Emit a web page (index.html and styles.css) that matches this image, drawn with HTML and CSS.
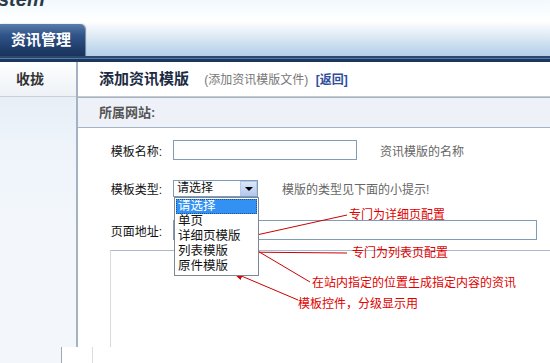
FILE: index.html
```html
<!DOCTYPE html>
<html lang="zh-CN">
<head>
    <meta charset="UTF-8">
    <title>添加资讯模版</title>
    <link rel="stylesheet" href="styles.css">
</head>
<body>
<div class="page">

    <div class="top">
        <div class="logo">stem</div>
        <div class="tab">资讯管理</div>
    </div>
    <div class="bar"></div>

    <div class="wrap">
        <div class="side">
            <div class="side-head">收拢</div>
        </div>

        <div class="main">
            <div class="main-head">
                <b class="title">添加资讯模版</b>
                <span class="sub">(添加资讯模版文件)</span>
                <a class="back">[返回]</a>
            </div>
            <div class="site">所属网站:</div>

            <div class="form">
                <div class="row">
                    <label>模板名称:</label>
                    <span class="input short"></span>
                    <span class="hint hint-name">资讯模版的名称</span>
                </div>
                <div class="row row-type">
                    <label>模板类型:</label>
                    <div class="select">
                        <span class="select-text">请选择</span>
                        <span class="select-btn"><i></i></span>
                        <ul class="menu">
                            <li class="on">请选择</li>
                            <li>单页</li>
                            <li>详细页模版</li>
                            <li>列表模版</li>
                            <li>原件模版</li>
                        </ul>
                    </div>
                    <span class="hint hint-type">模版的类型见下面的小提示!</span>
                </div>
                <div class="row row-url">
                    <label>页面地址:</label>
                    <span class="input long"></span>
                </div>
                <div class="box"></div>
            </div>
        </div>
    </div>

    <div class="foot">
        <div class="foot-side"></div>
        <div class="foot-col"></div>
    </div>

    <!-- 注释箭头 -->
    <div class="notes">
        <svg width="550" height="363" viewBox="0 0 550 363">
            <defs>
                <marker id="tip" markerUnits="userSpaceOnUse" markerWidth="11" markerHeight="8" refX="11" refY="4" orient="auto">
                    <path d="M0,0 L11,4 L0,8 z" fill="#d80000"/>
                </marker>
            </defs>
            <g stroke="#cc0000" stroke-width="1" fill="none">
                <line x1="310" y1="282" x2="207" y2="221" marker-end="url(#tip)"/>
                <line x1="347" y1="215" x2="243" y2="238" marker-end="url(#tip)"/>
                <line x1="347" y1="253" x2="233" y2="252" marker-end="url(#tip)"/>
                <line x1="298" y1="300" x2="232" y2="272" marker-end="url(#tip)"/>
            </g>
        </svg>
        <span class="note n1">专门为详细页配置</span>
        <span class="note n2">专门为列表页配置</span>
        <span class="note n3">在站内指定的位置生成指定内容的资讯</span>
        <span class="note n4">模板控件，分级显示用</span>
    </div>

</div>
</body>
</html>
```

FILE: styles.css
```css
*{
    box-sizing: border-box;
}
body{
    margin: 0;
    font-family: "Liberation Sans", "Noto Sans CJK SC", sans-serif;
    font-size: 12px;
    color: #111;
    background: #fff;
}
.page{
    position: relative;
    width: 550px;
    height: 363px;
    overflow: hidden;
}

/* header */
.top{
    height: 56px;
    display: flex;
    flex-direction: column;
    overflow: hidden;
    background: linear-gradient(#f2f9fd 0, #fff 38%, #e4eef7 60%, #c4daee 85%, #b4cfe8 100%);
}
.logo{
    margin: -11px 0 0 -2px;
    font-size: 20px;
    line-height: 20px;
    font-weight: bold;
    font-style: italic;
    color: #2c3a48;
}
.tab{
    margin-top: auto;
    width: 85px;
    height: 32px;
    padding-left: 11px;
    line-height: 32px;
    font-size: 15px;
    font-weight: bold;
    color: #fff;
    border-radius: 0 5px 0 0;
    background: linear-gradient(#5a7cab, #30548a 35%, #1e3b68 80%, #1a345d);
    box-shadow: 1px 0 1px rgba(20, 40, 70, 0.5);
}
.bar{
    height: 6px;
    background: linear-gradient(#294872 0, #294872 2px, #5a7aa0 2px, #5a7aa0 3px, #1c375e 3px);
}

/* layout */
.wrap{
    display: flex;
    height: 285px;
}
.side{
    width: 78px;
    border-right: 2px solid #a3b3c5;
    background: linear-gradient(#e2eaf3 0, #eef4fa 30%, #f3f7fc 60%);
}
.side-head{
    height: 35px;
    padding-left: 16px;
    line-height: 34px;
    font-size: 14px;
    font-weight: bold;
    color: #333;
    border-bottom: 1px solid #c8d0d8;
    background: linear-gradient(#fdfeff, #eef2f6);
}
.main{
    flex: 1;
}
.main-head{
    height: 35px;
    padding-left: 21px;
    line-height: 34px;
    border-bottom: 1px solid #c9c9c9;
}
.title{
    font-size: 15px;
    color: #1b2b42;
    margin-right: 12px;
}
.sub{
    color: #777;
    margin-right: 4px;
}
.back{
    color: #2e4d9e;
    font-weight: bold;
}
.site{
    height: 31px;
    padding-left: 21px;
    line-height: 29px;
    font-size: 13px;
    font-weight: bold;
    color: #555;
    background: #eef2f8;
    border-top: 1px solid #a3b5c8;
    border-bottom: 1px solid #a3b5c8;
}

/* form */
.form{
    padding-top: 12px;
}
.row{
    display: flex;
    align-items: center;
    height: 20px;
}
.row label{
    width: 84px;
    margin-right: 11px;
    text-align: right;
}
.row-type{
    margin-top: 20px;
    height: 17px;
}
.row-url{
    margin-top: 23px;
}
.input{
    height: 20px;
    border: 1px solid #7f9db9;
    background: #fff;
}
.short{
    width: 184px;
}
.long{
    width: 364px;
}
.hint{
    color: #666;
}
.hint-name{
    margin-left: 23px;
}
.hint-type{
    margin-left: 24px;
}

.select{
    position: relative;
    display: flex;
    width: 85px;
    height: 17px;
    border: 1px solid #7f9db9;
    background: #fff;
}
.select-text{
    flex: 1;
    padding-left: 3px;
    line-height: 15px;
}
.select-btn{
    display: flex;
    align-items: center;
    justify-content: center;
    width: 17px;
    height: 15px;
    border: 1px solid #b5c8e8;
    background: linear-gradient(#dbe6fa, #b4c9f0);
}
.select-btn i{
    border-left: 4px solid transparent;
    border-right: 4px solid transparent;
    border-top: 4px solid #000;
    margin-top: 1px;
}
.menu{
    position: absolute;
    top: 16px;
    left: 0;
    width: 85px;
    margin: 0;
    padding: 1px;
    list-style: none;
    background: #fff;
    border: 1px solid #7d8795;
    z-index: 2;
}
.menu li{
    height: 15px;
    padding-left: 2px;
    line-height: 15px;
    font-size: 12.5px;
}
.menu li.on{
    background: #3391f4;
    color: #fff;
    outline: 1px dotted #1a4f9a;
    outline-offset: -1px;
}

.box{
    margin: 10px 0 0 32px;
    height: 97px;
    border-top: 1px solid #a8b9ca;
    border-left: 1px solid #d9d9d9;
}

/* bottom strip */
.foot{
    display: flex;
    height: 16px;
}
.foot-side{
    width: 62px;
    background: #f3f7fc;
    border-right: 1px solid #9aaabb;
}
.foot-col{
    width: 31px;
    border-right: 1px solid #dcdcdc;
}

/* notes */
.notes{
    position: absolute;
    top: 0;
    left: 0;
    width: 550px;
    height: 363px;
    pointer-events: none;
}
.notes svg{
    position: absolute;
    top: 0;
    left: 0;
}
.note{
    position: absolute;
    line-height: 14px;
    color: #e00000;
    white-space: nowrap;
}
.n1{
    left: 349px;
    top: 208px;
}
.n2{
    left: 352px;
    top: 246px;
}
.n3{
    left: 312px;
    top: 276px;
}
.n4{
    left: 298px;
    top: 297px;
}
```
